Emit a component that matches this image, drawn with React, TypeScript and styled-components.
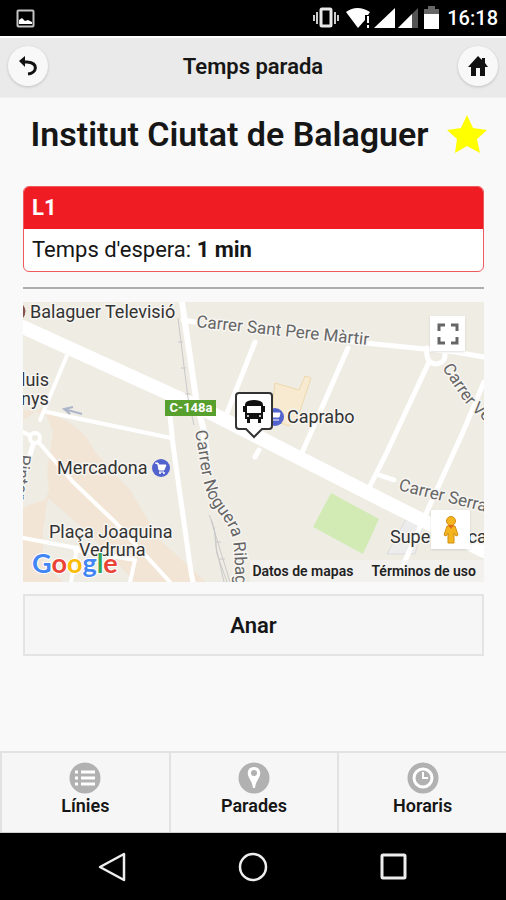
import React from "react";
import styled, { createGlobalStyle } from "styled-components";

const GlobalStyle = createGlobalStyle`
  *, *::before, *::after { box-sizing: border-box; }
  body {
    margin: 0;
    background: #f9f9f9;
    color: #161616;
    font-family: Roboto, "Liberation Sans", sans-serif;
  }
  button { font: inherit; color: inherit; }
  svg { display: block; }
`;

const Screen = styled.div`
  display: flex;
  flex-direction: column;
  min-height: 100vh;
`;

const StatusBar = styled.div`
  display: flex;
  align-items: center;
  justify-content: space-between;
  height: 36px;
  padding: 0 8px 0 16px;
  background: #000;
  color: #fff;
`;

const StatusIcons = styled.div`
  display: flex;
  align-items: center;
  gap: 8px;
`;

const StatusTime = styled.time`
  font-size: 20px;
  font-weight: 500;
`;

const Header = styled.header`
  display: flex;
  align-items: center;
  justify-content: space-between;
  height: 62px;
  padding: 0 8px 3px;
  background: #eaeaea;
  border-top: 2px solid #fff;
  border-bottom: 1px solid #f0f0f0;
`;

const HeaderTitle = styled.h1`
  margin: 0;
  font-size: 22px;
  font-weight: 600;
`;

const RoundButton = styled.button`
  display: grid;
  place-items: center;
  width: 40px;
  height: 40px;
  padding: 0;
  border: 0;
  border-radius: 50%;
  background: #f8f8f8;
  box-shadow: 0 1px 3px rgba(0, 0, 0, 0.18);
`;

const Content = styled.main`
  flex: 1;
  display: flex;
  flex-direction: column;
  padding: 12px 22px 0 23px;
`;

const StopHeading = styled.div`
  display: flex;
  align-items: center;
  justify-content: center;
  gap: 18px;
  height: 48px;
  padding-left: 10px;
`;

const StopName = styled.h2`
  margin: 0;
  font-size: 34px;
  line-height: 48px;
  font-weight: 600;
  white-space: nowrap;
`;

const StarButton = styled.button`
  padding: 0;
  border: 0;
  background: none;
`;

const LineCard = styled.section`
  margin-top: 28px;
  border: 1px solid #ee5a5e;
  border-radius: 6px;
  background: #fff;
  overflow: hidden;
  font-size: 22px;
`;

const LineName = styled.h3`
  margin: 0;
  padding: 0 8px;
  background: #f01c24;
  color: #fff;
  font-size: 22px;
  font-weight: 700;
  line-height: 42px;
`;

const WaitTime = styled.p`
  margin: 0;
  padding: 0 8px;
  line-height: 42px;
`;

const Divider = styled.hr`
  width: 100%;
  height: 2px;
  margin: 15px 0 13px;
  border: 0;
  background: #adadad;
`;

const MapPanel = styled.section`
  position: relative;
  height: 280px;
  overflow: hidden;
  background: #efece4;
`;

const MapCanvas = styled.svg`
  width: 100%;
  height: 100%;
`;

const MapButton = styled.button<{ $bottom?: boolean }>`
  position: absolute;
  right: ${(p) => (p.$bottom ? 14 : 19)}px;
  ${(p) => (p.$bottom ? "bottom: 33px;" : "top: 14px;")}
  display: grid;
  place-items: center;
  width: ${(p) => (p.$bottom ? 39 : 35)}px;
  height: ${(p) => (p.$bottom ? 39 : 35)}px;
  padding: 0;
  border: 0;
  background: #fff;
  box-shadow: 0 1px 2px rgba(0, 0, 0, 0.12);
`;

const MapFooter = styled.div`
  position: absolute;
  right: 0;
  bottom: 0;
  display: flex;
  gap: 18px;
  padding: 0 8px 0 2px;
  background: rgba(245, 245, 245, 0.6);
  font-size: 14px;
  line-height: 22px;
  font-weight: 600;
`;

const MapLink = styled.a`
  color: #222;
  text-decoration: none;
`;

const GoButton = styled.button`
  height: 62px;
  margin-top: 12px;
  border: 2px solid #e4e4e4;
  background: #f6f6f6;
  font-size: 22px;
  font-weight: 600;
`;

const TabBar = styled.nav`
  display: grid;
  grid-template-columns: repeat(3, 1fr);
  height: 82px;
  border-top: 2px solid #e2e2e2;
  border-bottom: 1px solid #cfcfcf;
  background: #f6f6f6;
`;

const Tab = styled.a`
  display: flex;
  flex-direction: column;
  align-items: center;
  padding-top: 9px;
  border-left: 2px solid #e2e2e2;
  color: inherit;
  text-decoration: none;
  font-size: 18px;
  line-height: 24px;
  font-weight: 600;
`;

const SystemNav = styled.div`
  display: flex;
  align-items: center;
  justify-content: center;
  gap: 112px;
  height: 67px;
  background: #000;
`;

const SystemButton = styled.button`
  padding: 0;
  border: 0;
  background: none;
`;

const TabIcon = ({ children }: { children: React.ReactNode }) => (
  <svg width="32" height="32" viewBox="0 0 32 32" aria-hidden="true">
    <circle cx="16" cy="16" r="15.5" fill="#b1b1b1" />
    {children}
  </svg>
);

const StreetMap = () => (
  <MapCanvas viewBox="0 0 461 280" preserveAspectRatio="xMidYMid slice" role="img" aria-label="Mapa">
    <rect width="461" height="280" fill="#efece4" />
    <path d="M0 108L26 112Q60 122 72 150L107 188L137 238L183 280H0V205L22 198L26 188L24 170L30 130L20 105L0 118Z" fill="#f2e5d5" />
    <path d="M20 262L20 228L25 196L62 228L112 280H40Z" fill="#efece4" />
    <path d="M0 116L12 126L3 206H0Z" fill="#efece4" />
    <path d="M250 97L252 81L276 88L282 74L288 76L276 112L266 124L250 118Z" fill="#f8ead0" stroke="#eed9ac" />
    <path d="M308 191L356 217L340 252L290 225Z" fill="#d2ebb5" />
    <path d="M384 215L400 223L392 252H364Z" fill="#ececec" stroke="#dcdcdc" />
    <g fill="none" stroke="#fff" strokeWidth="5" strokeLinecap="round" strokeLinejoin="round">
      <path d="M0 25L180 107L363 200L461 249" strokeWidth="14" />
      <path d="M159 0L174 103L180 125L184 150" strokeWidth="6" />
      <path d="M160 18L172 20M312 38L432 50L461 55" />
      <path d="M45 51L17 118M24 110L148 136" strokeWidth="4" />
      <path d="M0 130L12 136L50 180L92 220L147 280" strokeWidth="4" />
      <path d="M147 113L150 143L168 270L170 280" />
      <path d="M232 40L202 116M232 155L236 148" />
      <path d="M325 46L282 144L277 155M406 60L364 150L342 194M461 80L440 130L392 236L378 268M371 178L353 172" />
      <path d="M0 236L54 246L48 280M52 248L112 258L107 280" strokeWidth="4" />
      <path d="M12 136L2 170" />
      <path d="M404 46Q402 61 413 62Q425 61 421 46" />
    </g>
    <circle cx="12" cy="136" r="5" fill="#efece4" stroke="#fff" strokeWidth="4" />
    <g fill="none" stroke="#c9c9c9">
      <path d="M155 16L165 96L171 123M186 213Q193 225 193 245L201 280M191 225L194 252L204 280M188 218L207 280" />
      <path d="M155 40h5M158 66h5M162 92h5M192 240h6M195 257h7" />
    </g>
    <path d="M59 112L41 107M50 105L41 107L47 112" fill="none" stroke="#adb5cb" strokeWidth="2" />
    <path d="M0 3Q5 9 0 16Z" fill="#84524d" />
    <defs>
      <path id="street-noguera" d="M172 129C176 150 178 172 183 188C188 206 204 216 209 234C213 250 211 270 214 310" />
      <path id="street-vertical" d="M419 66L441 99Q449 110 466 122" />
    </defs>
    <g fontSize="18" fill="#333" stroke="#f7f5f1" strokeWidth="3" strokeLinejoin="round" paintOrder="stroke">
      <text x="7" y="16">Balaguer Televisió</text>
      <text x="-2" y="84">luis</text>
      <text x="-2" y="103">nys</text>
      <text x="34" y="172">Mercadona</text>
      <text x="26" y="236">Plaça Joaquina</text>
      <text x="56" y="254">Vedruna</text>
      <text x="264" y="121">Caprabo</text>
      <text x="367" y="241">Supermerca</text>
    </g>
    <g fontSize="17" fill="#666" stroke="#f7f5f1" strokeWidth="3" strokeLinejoin="round" paintOrder="stroke">
      <text transform="translate(173 25) rotate(6)">Carrer Sant Pere Màrtir</text>
      <text transform="translate(375 188) rotate(14)">Carrer Serra</text>
      <text transform="translate(-4 152) rotate(96)">Pintor</text>
      <text><textPath href="#street-noguera">Carrer Noguera Ribagorçana</textPath></text>
      <text><textPath href="#street-vertical">Carrer Ve</textPath></text>
    </g>
    <rect x="142" y="98" width="51" height="16" fill="#58a02e" />
    <text x="168" y="110" fontSize="13" fontWeight="700" fill="#fff" textAnchor="middle">C-148a</text>
    <g fill="#5263ce">
      <circle cx="138" cy="166" r="9" />
      <circle cx="252" cy="115" r="9" />
    </g>
    <path d="M132 161H135L136 163H143L141 168H136L135 163M136 170H141" fill="#fff" stroke="#fff" />
    <circle cx="137" cy="171" r="1" fill="#fff" />
    <circle cx="141" cy="171" r="1" fill="#fff" />
    <path d="M250 111H257L256 115H250M250 118H256" fill="#fff" stroke="#fff" />
    <text x="9" y="271" fontSize="27" fontFamily="Lato, sans-serif" fontWeight="700" stroke="#fff" strokeWidth="2" paintOrder="stroke">
      <tspan fill="#4285f4">G</tspan><tspan fill="#ea4335">o</tspan><tspan fill="#fbbc05">o</tspan><tspan fill="#4285f4">g</tspan><tspan fill="#34a853">l</tspan><tspan fill="#ea4335">e</tspan>
    </text>
    <path d="M216 91H246Q249 91 249 94V124Q249 127 246 127H239L231 135L223 127H216Q213 127 213 124V94Q213 91 216 91Z" fill="#fff" stroke="#333" strokeWidth="2" />
    <path fillRule="evenodd" d="M225 99Q231 97 237 99Q240 100 240 103V117H238V121H235V117H227V121H224V117H222V103Q222 100 225 99ZM224 104V111H238V104Z" fill="#111" />
    <circle cx="225" cy="114" r="1" fill="#fff" />
    <circle cx="237" cy="114" r="1" fill="#fff" />
    <path d="M221 104V110M241 104V110" stroke="#111" strokeWidth="2" />
  </MapCanvas>
);

export default function App() {
  return (
    <Screen>
      <GlobalStyle />
      <StatusBar>
        <svg width="19" height="19" viewBox="0 0 19 19" aria-hidden="true">
          <rect x="1.5" y="1.5" width="16" height="16" rx="1" fill="none" stroke="#c4c4c4" strokeWidth="2" />
          <path d="M3 15V11L6 9L9 12L12 11L16 13V15Z" fill="#fff" />
        </svg>
        <StatusIcons>
          <svg width="127" height="24" viewBox="0 0 127 24" aria-hidden="true">
            <rect x="9" y="3" width="10" height="17" rx="1" fill="none" stroke="#e8e8e8" strokeWidth="3" />
            <path d="M5 6V18M2 9V15M23 6V18M26 9V15" stroke="#ccc" strokeWidth="2" />
            <path d="M34 6Q45-2 58 6L56 9H53V14L46 22Z" fill="#fff" />
            <path d="M56 10V17M56 19V22" stroke="#fff" strokeWidth="2" />
            <path d="M62 22H83V2Z" fill="#fff" />
            <path d="M86 22L106 2V22Z" fill="#555" />
            <path d="M86 22H100V8Z" fill="#fff" />
            <path d="M112 3H116V0H123V3H127V9H112Z" fill="#666" />
            <rect x="112" y="8" width="15" height="15" fill="#fff" />
          </svg>
          <StatusTime>16:18</StatusTime>
        </StatusIcons>
      </StatusBar>
      <Header>
        <RoundButton type="button" aria-label="Enrere">
          <svg width="20" height="20" viewBox="0 0 20 20">
            <path d="M5 6H9C21 7 19 17 10 18" fill="none" stroke="#111" strokeWidth="3" />
            <path d="M7 0V11L1 5Z" fill="#111" />
          </svg>
        </RoundButton>
        <HeaderTitle>Temps parada</HeaderTitle>
        <RoundButton type="button" aria-label="Inici">
          <svg width="20" height="20" viewBox="0 0 20 20">
            <path d="M10 0L14 4V2H17V7L20 11H17V20H12V12H8V20H3V11H0Z" fill="#111" />
          </svg>
        </RoundButton>
      </Header>
      <Content>
        <StopHeading>
          <StopName>Institut Ciutat de Balaguer</StopName>
          <StarButton type="button" aria-label="Preferida">
            <svg width="40" height="38" viewBox="0 0 40 38">
              <path d="M20 0L26 13L40 15L30 24L33 38L20 31L8 38L10 24L0 15L14 13Z" fill="#ff0" />
            </svg>
          </StarButton>
        </StopHeading>
        <LineCard>
          <LineName>L1</LineName>
          <WaitTime>Temps d'espera: <strong>1 min</strong></WaitTime>
        </LineCard>
        <Divider />
        <MapPanel>
          <StreetMap />
          <MapButton type="button" aria-label="Pantalla completa">
            <svg width="22" height="22" viewBox="0 0 22 22">
              <path d="M2 8V2H8M14 2H20V8M20 14V20H14M8 20H2V14" fill="none" stroke="#666" strokeWidth="3" />
            </svg>
          </MapButton>
          <MapButton type="button" $bottom aria-label="Street View">
            <svg width="16" height="28" viewBox="0 0 16 28">
              <circle cx="8" cy="5" r="4.5" fill="#f5b51f" stroke="#d18e13" />
              <path d="M4 10H12L15 19L13 20L11 17V27H5V17L3 20L1 19Z" fill="#f5b51f" stroke="#d18e13" />
              <path d="M5 9L8 13L11 9Z" fill="#df6a19" />
            </svg>
          </MapButton>
          <MapFooter>
            <MapLink href="#datos">Datos de mapas</MapLink>
            <MapLink href="#terminos">Términos de uso</MapLink>
          </MapFooter>
        </MapPanel>
        <GoButton type="button">Anar</GoButton>
      </Content>
      <TabBar>
        <Tab href="#linies">
          <TabIcon>
            <path d="M6 10H9M12 10H26M6 16H9M12 16H26M6 22H9M12 22H26" stroke="#fff" strokeWidth="3" />
          </TabIcon>
          Línies
        </Tab>
        <Tab href="#parades">
          <TabIcon>
            <path fillRule="evenodd" d="M16 5C11 5 9 9 10 13C11 17 14 19 15 26H17C18 19 21 17 22 13C23 9 21 5 16 5ZM16 8A3 3 0 1 1 16 14A3 3 0 1 1 16 8Z" fill="#fff" />
          </TabIcon>
          Parades
        </Tab>
        <Tab href="#horaris">
          <TabIcon>
            <circle cx="16" cy="16" r="9" fill="none" stroke="#fff" strokeWidth="3" />
            <path d="M16 10V16H21" fill="none" stroke="#fff" strokeWidth="2" />
          </TabIcon>
          Horaris
        </Tab>
      </TabBar>
      <SystemNav>
        <SystemButton type="button" aria-label="Enrere">
          <svg width="28" height="30" viewBox="0 0 28 30"><path d="M26 2V28L2 15Z" fill="none" stroke="#eee" strokeWidth="2.5" strokeLinejoin="round" /></svg>
        </SystemButton>
        <SystemButton type="button" aria-label="Inici">
          <svg width="30" height="30" viewBox="0 0 30 30"><circle cx="15" cy="15" r="13" fill="none" stroke="#eee" strokeWidth="2.5" /></svg>
        </SystemButton>
        <SystemButton type="button" aria-label="Recents">
          <svg width="28" height="28" viewBox="0 0 28 28"><rect x="2" y="2" width="23" height="23" rx="1" fill="none" stroke="#eee" strokeWidth="3" /></svg>
        </SystemButton>
      </SystemNav>
    </Screen>
  );
}
